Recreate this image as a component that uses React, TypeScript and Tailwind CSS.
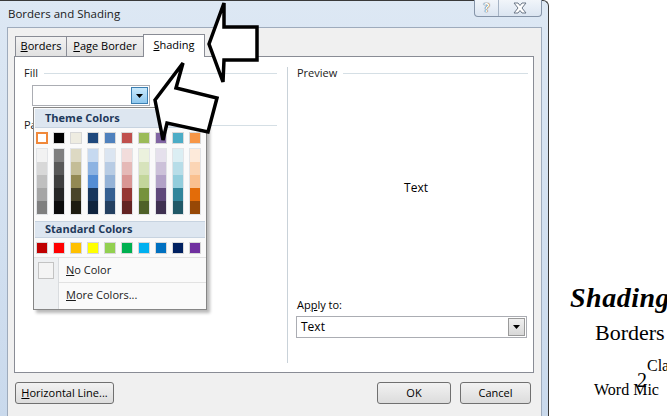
import React from 'react';

const THEME = ['#FFFFFF', '#000000', '#EEECE1', '#1F497D', '#4F81BD', '#C0504D', '#9BBB59', '#8064A2', '#4BACC6', '#F79646'];

const SHADES = [
    ['#F2F2F2', '#D8D8D8', '#BFBFBF', '#A5A5A5', '#7F7F7F'],
    ['#7F7F7F', '#595959', '#3F3F3F', '#262626', '#0C0C0C'],
    ['#DDD9C3', '#C4BD97', '#938953', '#494429', '#1D1B10'],
    ['#C6D9F0', '#8DB3E2', '#548DD4', '#17365D', '#0F243E'],
    ['#DBE5F1', '#B8CCE4', '#95B3D7', '#366092', '#244061'],
    ['#F2DCDB', '#E5B9B7', '#D99694', '#953734', '#632423'],
    ['#EBF1DD', '#D7E3BC', '#C3D69B', '#76923C', '#4F6128'],
    ['#E5E0EC', '#CCC1D9', '#B2A2C7', '#5F497A', '#3F3151'],
    ['#DBEEF3', '#B7DDE8', '#92CDDC', '#31859B', '#205867'],
    ['#FDEADA', '#FBD5B5', '#FAC08F', '#E36C09', '#974806'],
];

const STANDARD = ['#C00000', '#FF0000', '#FFC000', '#FFFF00', '#92D050', '#00B050', '#00B0F0', '#0070C0', '#002060', '#7030A0'];

function DownTriangle() {
    return (
        <svg width="7" height="4" viewBox="0 0 7 4">
            <path d="M0 0h7L3.5 4z" fill="#000" />
        </svg>
    );
}

function GroupHeader({ label }: { label: string }) {
    return (
        <div className="flex items-center h-[14px]">
            <span className="text-[11px] leading-[14px] text-[#1a1a1a]">{label}</span>
            <div className="flex-1 ml-[6px] h-px bg-[#d5dfe5]" />
        </div>
    );
}

function ColorPopup() {
    return (
        <div className="absolute left-[33px] top-[107px] w-[174px] h-[203px] border border-[#868686] bg-[#fafafa] shadow-[3px_3px_3px_rgba(0,0,0,0.28)] flex flex-col">
            <div className="mx-px mt-px h-[19px] bg-[#dde6f0] border-b border-[#c7d3e0] pl-[10px] flex items-center text-[11px] font-bold text-[#1e395b]">
                Theme Colors
            </div>
            <div className="flex gap-[5px] pl-[2px] mt-[4px]">
                {THEME.map((c, i) => (
                    <div
                        key={c}
                        className={i === 0 ? 'w-[12px] h-[12px] border-2 border-[#f0883a]' : 'w-[12px] h-[12px] border border-[#d8d8d8]'}
                        style={{ backgroundColor: c }}
                    />
                ))}
            </div>
            <div className="flex gap-[5px] pl-[2px] mt-[4px]">
                {SHADES.map((col, i) => (
                    <div key={i} className="w-[12px] border border-[#e2e4e7] flex flex-col">
                        {col.map((c) => (
                            <div key={c} className="h-[13px]" style={{ backgroundColor: c }} />
                        ))}
                    </div>
                ))}
            </div>
            <div className="mx-px mt-[6px] h-[17px] bg-[#dde6f0] border-y border-[#c7d3e0] pl-[10px] flex items-center text-[11px] font-bold text-[#1e395b]">
                Standard Colors
            </div>
            <div className="flex gap-[5px] pl-[2px] mt-[4px]">
                {STANDARD.map((c) => (
                    <div key={c} className="w-[12px] h-[12px] border border-[#d8d8d8]" style={{ backgroundColor: c }} />
                ))}
            </div>
            <div className="mt-[3px] flex-1 flex border-t border-[#e2e2e2]">
                <div className="w-[25px] bg-[#eef0f2] border-r border-[#d9dcdf] flex flex-col">
                    <div className="h-[25px] flex items-center justify-center">
                        <div className="w-[16px] h-[17px] border border-[#c3c3c3] bg-[#f4f4f4]" />
                    </div>
                </div>
                <div className="flex-1 flex flex-col text-[11px] text-[#1b1b1b]">
                    <div className="h-[25px] flex items-center pl-[7px] border-b border-[#e2e2e2]">
                        <span><span className="underline">N</span>o Color</span>
                    </div>
                    <div className="h-[25px] flex items-center pl-[7px]">
                        <span><span className="underline">M</span>ore Colors...</span>
                    </div>
                </div>
            </div>
        </div>
    );
}

function Arrows() {
    return (
        <svg className="absolute left-0 top-0 pointer-events-none" width="667" height="416" viewBox="0 0 667 416">
            <polygon
                points="209,44 224,3 224,27 257,27 257,60 224,60 223,82"
                fill="#fff"
                stroke="#000"
                strokeWidth="3.5"
                strokeLinejoin="miter"
            />
            <polygon
                points="155,100 183,63 176,88 217,98 208,132 167,123 163,140"
                fill="#fff"
                stroke="#000"
                strokeWidth="3.5"
                strokeLinejoin="miter"
            />
        </svg>
    );
}

function Dialog() {
    return (
        <div className="w-[549px] h-[420px] shrink-0 flex flex-col bg-gradient-to-b from-[#dde8f4] to-[#c9d9ec] border-t border-r border-[#3a3a3a] rounded-tr-[6px]">
            {/* title bar */}
            <div className="h-[26px] flex items-start relative">
                <span className="pl-[8px] pt-[5px] text-[11.5px] leading-[16px] text-[#1a1a1a]">Borders and Shading</span>
                <div className="ml-auto mr-[6px] -mt-px flex h-[17px] border border-t-0 border-[#8594a8] rounded-b-[4px] bg-gradient-to-b from-[#f1f5fa] to-[#dbe5f1] overflow-hidden">
                    <div className="w-[24px] flex items-center justify-center border-r border-[#a5b3c4] text-[12px] font-bold text-[#fff] [text-shadow:0_0_1px_#333,0_0_1px_#333]">
                        ?
                    </div>
                    <div className="w-[42px] flex items-center justify-center">
                        <svg width="14" height="12" viewBox="0 0 14 12">
                            <path
                                d="M1 1h4l2 2.5L9 1h4L9 6l4 5H9L7 8.5 5 11H1l4-5z"
                                fill="#fff"
                                stroke="#6b7787"
                                strokeWidth="1"
                            />
                        </svg>
                    </div>
                </div>
            </div>
            {/* client area */}
            <div className="flex-1 ml-[7px] mr-[6px] border border-[#9eabbc] bg-[#f0f0f0] flex flex-col pl-[6px] pr-[7px] text-[11px] text-black">
                {/* tabs */}
                <div className="mt-[6px] h-[23px] flex items-end pl-[1px] relative z-10">
                    <div className="w-[52px] h-[20px] mb-px border border-b-0 border-[#898c95] bg-gradient-to-b from-[#f2f2f2] to-[#e1e1e1] flex items-center justify-center">
                        <span><span className="underline">B</span>orders</span>
                    </div>
                    <div className="w-[78px] h-[20px] mb-px -ml-px border border-b-0 border-[#898c95] bg-gradient-to-b from-[#f2f2f2] to-[#e1e1e1] flex items-center justify-center">
                        <span><span className="underline">P</span>age Border</span>
                    </div>
                    <div className="w-[62px] h-[23px] -ml-px border border-b-0 border-[#898c95] bg-white flex items-center justify-center pb-[1px]">
                        <span><span className="underline">S</span>hading</span>
                    </div>
                </div>
                {/* panel */}
                <div className="h-[317px] -mt-px border border-[#898c95] bg-white flex">
                    <div className="w-[253px] ml-[9px] pt-[9px] flex flex-col">
                        <GroupHeader label="Fill" />
                        <div className="ml-[8px] mt-[5px] w-[118px] h-[21px] border border-[#abadb3] bg-white flex justify-end p-px">
                            <div className="w-[17px] border border-[#3c7fb1] bg-gradient-to-b from-[#c9e9fc] to-[#8fc8ee] flex items-center justify-center">
                                <DownTriangle />
                            </div>
                        </div>
                        <div className="mt-[12px]">
                            <GroupHeader label="Pattern" />
                        </div>
                    </div>
                    <div className="w-[241px] ml-[10px] mt-[10px] mb-[9px] border-l border-[#c9d2d9] flex flex-col">
                        <div className="pl-[9px] -mt-[1px]">
                            <GroupHeader label="Preview" />
                        </div>
                        <div className="flex-1 flex items-center justify-center pl-[16px] pb-[2px] text-[12px]">Text</div>
                        <div className="pl-[9px] text-[11px] leading-[14px]">
                            Ap<span className="underline">p</span>ly to:
                        </div>
                        <div className="ml-[8px] mt-[4px] mb-[25px] w-[231px] h-[22px] border border-[#abadb3] bg-white flex items-center p-px">
                            <span className="pl-[3px] flex-1 text-[12px]">Text</span>
                            <div className="w-[17px] h-full border border-[#9a9a9a] bg-gradient-to-b from-[#f0f0f0] to-[#d8d8d8] flex items-center justify-center">
                                <DownTriangle />
                            </div>
                        </div>
                    </div>
                </div>
                {/* buttons */}
                <div className="mt-[9px] flex items-start">
                    <button className="ml-px w-[99px] h-[22px] border border-[#707070] rounded-[3px] bg-gradient-to-b from-[#f2f2f2] to-[#dcdcdc] text-[11px] leading-[20px]">
                        <span className="underline">H</span>orizontal Line...
                    </button>
                    <button className="ml-auto w-[74px] h-[22px] border border-[#707070] rounded-[3px] bg-gradient-to-b from-[#f2f2f2] to-[#dcdcdc] text-[11px] leading-[20px]">
                        OK
                    </button>
                    <button className="ml-[9px] mr-[3px] w-[71px] h-[22px] border border-[#707070] rounded-[3px] bg-gradient-to-b from-[#f2f2f2] to-[#dcdcdc] text-[11px] leading-[20px]">
                        Cancel
                    </button>
                </div>
            </div>
        </div>
    );
}

function PageText() {
    return (
        <div className="flex-1 overflow-hidden whitespace-nowrap text-black font-['Liberation_Serif',serif] flex flex-col pt-[283px]">
            <div className="pl-[21px] text-[28px] leading-[30px] font-bold italic tracking-[0.5px]">Shading</div>
            <div className="pl-[46px] mt-[8px] text-[22px] leading-[24px]">Borders</div>
            <div className="pl-[98px] mt-[12px] text-[16px] leading-[18px]">Cla</div>
            <div className="pl-[45px] mt-[6px] text-[16px] leading-[18px] relative">
                Word Mic
                <span className="absolute left-[88px] -top-[11px] text-[20px] leading-[20px]">2</span>
            </div>
        </div>
    );
}

export default function App() {
    return (
        <div className="relative w-[667px] h-[416px] overflow-hidden bg-white flex font-['Open_Sans','Noto_Sans',sans-serif]">
            <Dialog />
            <PageText />
            <ColorPopup />
            <Arrows />
        </div>
    );
}
